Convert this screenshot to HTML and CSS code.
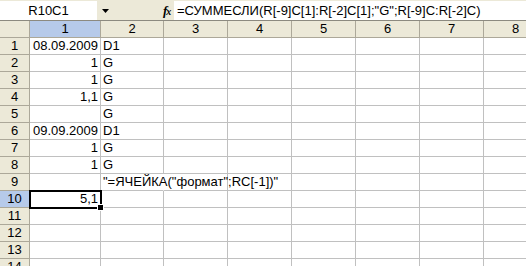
FILE: index.html
```html
<!DOCTYPE html>
<html lang="ru">
<head>
  <meta charset="UTF-8" />
  <title>Книга1</title>
  <link rel="stylesheet" href="styles.css">
</head>
<body>

  <div class="formula-bar">
    <div class="name-box">R10C1</div>
    <div class="name-drop">
      <svg width="7" height="4" viewBox="0 0 7 4"><polygon points="0,0 7,0 3.5,4" fill="#000"/></svg>
    </div>
    <div class="fx">f<span>x</span></div>
    <div class="formula">=СУММЕСЛИ(R[-9]C[1]:R[-2]C[1];"G";R[-9]C:R[-2]C)</div>
  </div>

  <div class="sheet" id="sheet"></div>

  <script>
    const sheet = document.getElementById("sheet");
    const cols = 8;
    const rows = 14;
    // [строка, столбец, текст, выравнивание]
    const data = {
      "1-1": ["08.09.2009", "r"], "1-2": ["D1", "l"],
      "2-1": ["1", "r"], "2-2": ["G", "l"],
      "3-1": ["1", "r"], "3-2": ["G", "l"],
      "4-1": ["1,1", "r"], "4-2": ["G", "l"],
      "5-2": ["G", "l"],
      "6-1": ["09.09.2009", "r"], "6-2": ["D1", "l"],
      "7-1": ["1", "r"], "7-2": ["G", "l"],
      "8-1": ["1", "r"], "8-2": ["G", "l"],
      "9-2": ["\"=ЯЧЕЙКА(\"формат\";RC[-1])\"", "l over"],
      "10-1": ["5,1", "r"]
    };

    function cell(cls, text) {
      const d = document.createElement("div");
      d.className = cls;
      if (text) d.textContent = text;
      sheet.appendChild(d);
      return d;
    }

    cell("corner");
    for (let c = 1; c <= cols; c++) {
      cell("col-head" + (c === 1 ? " active" : ""), String(c));
    }
    for (let r = 1; r <= rows; r++) {
      cell("row-head" + (r === 10 ? " active" : ""), String(r));
      for (let c = 1; c <= cols; c++) {
        const v = data[r + "-" + c];
        const d = cell("cell" + (v ? " " + v[1] : ""), v ? v[0] : "");
        if (r === 10 && c === 1) {
          d.classList.add("selected");
          const h = document.createElement("span");
          h.className = "handle";
          d.appendChild(h);
        }
      }
    }
  </script>

</body>
</html>
```

FILE: styles.css
```css
body {
  margin: 0;
  width: 526px;
  height: 266px;
  overflow: hidden;
  background: #fff;
  font-family: "Liberation Sans", Arial, sans-serif;
  font-size: 13px;
  color: #000;
}

.formula-bar {
  display: flex;
  height: 20px;
  background: #ece9d8;
  box-sizing: border-box;
  padding-top: 1px;
}

.name-box {
  width: 97px;
  height: 19px;
  background: #fff;
  line-height: 19px;
  text-align: center;
}

.name-drop {
  width: 16px;
  height: 19px;
  display: flex;
  align-items: center;
  justify-content: center;
}

.fx {
  margin-left: 50px;
  width: 10px;
  font-family: "Liberation Serif", serif;
  font-style: italic;
  font-weight: bold;
  font-size: 13px;
  line-height: 19px;
  letter-spacing: -1px;
}

.fx span {
  font-size: 10px;
}

.formula {
  flex: 1;
  height: 19px;
  margin-left: 1px;
  background: #fff;
  line-height: 19px;
  padding-left: 3px;
  white-space: nowrap;
}

.sheet {
  display: grid;
  grid-template-columns: 29px 71px 63px repeat(6, 64px);
  grid-template-rows: 17px repeat(14, 17px);
  border-top: 1px solid #8c8a80;
  border-left: 1px solid #8c8a80;
  box-sizing: border-box;
}

.sheet > div {
  box-sizing: border-box;
  line-height: 16px;
  white-space: nowrap;
}

.corner,
.col-head,
.row-head {
  background: #ece9d8;
  border-right: 1px solid #aca899;
  border-bottom: 1px solid #aca899;
  text-align: center;
  color: #000;
}

.corner {
  margin-left: -1px;
}

.row-head {
  margin-left: -1px;
}

.col-head.active,
.row-head.active {
  background: #b6caea;
}

.cell {
  border-right: 1px solid #c0c0c0;
  border-bottom: 1px solid #c0c0c0;
  padding: 0 2px;
  position: relative;
}

.cell.r {
  text-align: right;
}

.cell.l {
  text-align: left;
}

.cell.over {
  overflow: visible;
  z-index: 1;
  border-right-color: transparent;
}

.cell.selected {
  outline: 2px solid #000;
  outline-offset: -1px;
  z-index: 2;
}

.handle {
  position: absolute;
  right: -4px;
  bottom: -4px;
  width: 5px;
  height: 5px;
  background: #000;
  border: 1px solid #fff;
}
```
